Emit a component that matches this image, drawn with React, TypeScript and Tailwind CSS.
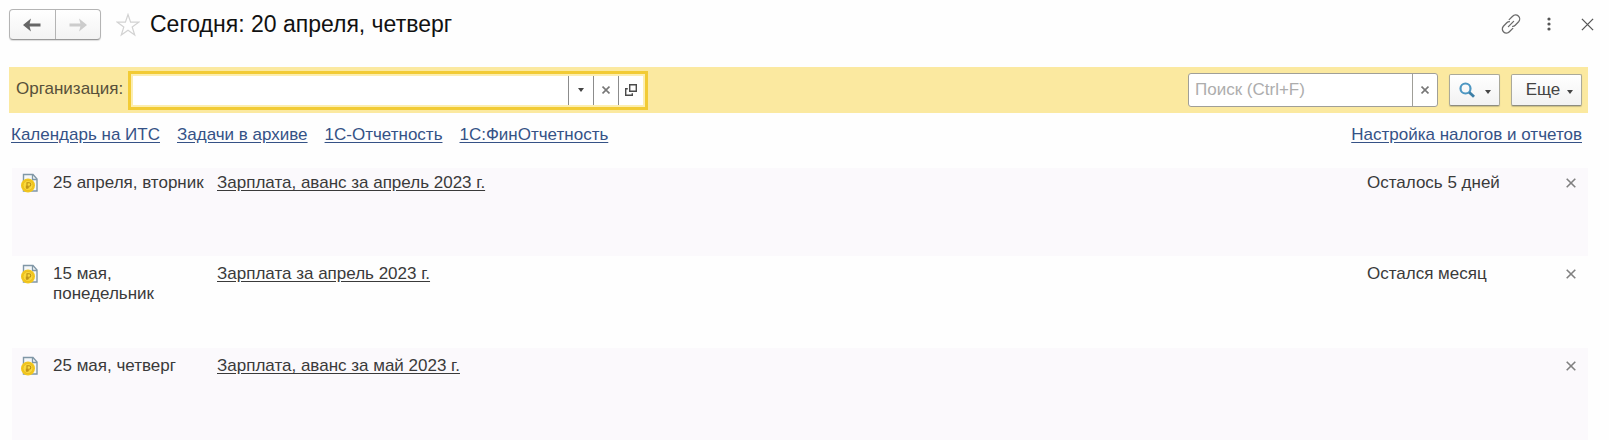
import { useState } from 'react'
import type { ReactNode } from 'react'

interface Task {
  id: number
  date: string
  title: string
  left: string
}

const initialTasks: Task[] = [
  { id: 1, date: '25 апреля, вторник', title: 'Зарплата, аванс за апрель 2023 г.', left: 'Осталось 5 дней' },
  { id: 2, date: '15 мая, понедельник', title: 'Зарплата за апрель 2023 г.', left: 'Остался месяц' },
  { id: 3, date: '25 мая, четверг', title: 'Зарплата, аванс за май 2023 г.', left: '' },
]

const links = ['Календарь на ИТС', 'Задачи в архиве', '1С-Отчетность', '1С:ФинОтчетность']

function ArrowIcon({ className }: { className: string }) {
  return (
    <svg viewBox="0 0 18 14" className={`h-3.5 w-[18px] ${className}`} fill="currentColor" aria-hidden="true">
      <path d="M0 7 8 .5 6.600 5.400H17.500V8.600H6.600L8 13.500Z" />
    </svg>
  )
}

function StarIcon() {
  return (
    <svg viewBox="0 0 24 24" className="size-6" fill="none" stroke="#d2d2d2" strokeWidth="1.2" aria-hidden="true">
      <path d="M12 1.5 14.6 9.2H22.7L16.2 14 18.7 22 12 17.2 5.3 22 7.8 14 1.3 9.2H9.4Z" />
    </svg>
  )
}

function LinkIcon() {
  return (
    <svg viewBox="0 0 20 20" className="size-5" fill="none" stroke="#6b6b6b" strokeWidth="1.3" strokeLinecap="round" aria-hidden="true">
      <path d="M8.200 5.600 11.600 2.300a3.900 3.900 0 0 1 6 5.500L14.200 11.200a3.900 3.900 0 0 1-2.600 1.100" />
      <path d="M11.800 14.400 8.400 17.700a3.900 3.900 0 0 1-6-5.500L5.800 8.800a3.900 3.900 0 0 1 2.600-1.100" />
      <path d="M7.400 12.600 12.600 7.400" />
    </svg>
  )
}

function DotsIcon() {
  return (
    <svg viewBox="0 0 4 14" className="h-3.5 w-1" fill="#555" aria-hidden="true">
      <circle cx="2" cy="2" r="1.6" />
      <circle cx="2" cy="7" r="1.6" />
      <circle cx="2" cy="12" r="1.6" />
    </svg>
  )
}

function CrossIcon({ className }: { className: string }) {
  return (
    <svg viewBox="0 0 10 10" className={className} fill="none" stroke="currentColor" aria-hidden="true">
      <path d="M.7.7 9.3 9.3M9.3.7.7 9.3" />
    </svg>
  )
}

function CaretIcon({ className = '' }: { className?: string }) {
  return (
    <svg viewBox="0 0 6 4" className={`h-1 w-1.5 ${className}`} fill="#444" aria-hidden="true">
      <path d="M0 0H6L3 4Z" />
    </svg>
  )
}

function OpenIcon() {
  return (
    <svg viewBox="0 0 12 12" className="size-3" fill="none" stroke="#4a4a4a" strokeWidth="1.4" aria-hidden="true">
      <path d="M4.700.7H11.300V7.300H4.700Z" />
      <path d="M2.800 4.700H.7V11.300H7.300V9.200" />
    </svg>
  )
}

function SearchIcon() {
  return (
    <svg viewBox="0 0 16 16" className="size-4" fill="none" aria-hidden="true">
      <circle cx="6.500" cy="6.500" r="5" stroke="#4d97c2" strokeWidth="2.200" />
      <path d="M10.200 10.200 15 14.800" stroke="#3b7ea6" strokeWidth="2.800" />
    </svg>
  )
}

function SalaryIcon() {
  return (
    <svg viewBox="0 0 18 20" className="h-5 w-[18px]" fill="none" aria-hidden="true">
      <path d="M2.500 1.500H12L16 6V18H2.500Z" fill="#f4f7f9" stroke="#8097a6" strokeWidth="1.400" />
      <path d="M11.500 1.500V6.500H16" stroke="#8097a6" strokeWidth="1.300" />
      <circle cx="7" cy="12.500" r="7" fill="#f2c71e" />
      <circle cx="7" cy="12.500" r="5" fill="#fad93c" stroke="#e8b91a" strokeWidth=".8" />
      <path d="M6 16V9.700H8a1.800 1.800 0 0 1 0 3.600H4.800M4.800 14.800H8.200" stroke="#bb8d12" strokeWidth="1.100" />
    </svg>
  )
}

function IconButton({ label, className, onClick, children }: {
  label: string
  className: string
  onClick?: () => void
  children: ReactNode
}) {
  return (
    <button type="button" aria-label={label} onClick={onClick} className={`flex items-center justify-center ${className}`}>
      {children}
    </button>
  )
}

function TitleBar() {
  return (
    <header className="flex h-[67px] items-start pt-[9px] pr-1.5">
      <div className="flex h-[31px] w-[92px] rounded-sm border border-[#b4b4b4] border-b-[#999] bg-gradient-to-b from-white to-[#f3f3f3] shadow-[0_1px_1px_#ddd]">
        <IconButton label="Назад" className="flex-1 border-r border-[#b4b4b4]">
          <ArrowIcon className="text-[#666]" />
        </IconButton>
        <IconButton label="Вперед" className="flex-1">
          <ArrowIcon className="rotate-180 text-[#ccc]" />
        </IconButton>
      </div>
      <IconButton label="В избранное" className="ml-[15px] h-[31px]">
        <StarIcon />
      </IconButton>
      <h1 className="ml-2.5 text-[23px] leading-[30px] text-[#111]">Сегодня: 20 апреля, четверг</h1>
      <div className="ml-auto flex h-[30px] items-center">
        <IconButton label="Получить ссылку" className="size-8">
          <LinkIcon />
        </IconButton>
        <IconButton label="Еще действия" className="ml-1.5 size-8">
          <DotsIcon />
        </IconButton>
        <IconButton label="Закрыть" className="ml-1.5 size-8">
          <CrossIcon className="size-[13px] text-[#555]" />
        </IconButton>
      </div>
    </header>
  )
}

function FilterBar() {
  const [org, setOrg] = useState('')
  const [query, setQuery] = useState('')
  const button = 'flex h-8 items-center justify-center rounded-xs border border-[#aaa99a] border-b-[#8d8c80] bg-gradient-to-b from-white to-[#f2f2f2] shadow-[0_1px_1px_#c9bd84]'

  return (
    <div className="flex h-[46px] items-center bg-[#fbe9a0] pr-1.5 pl-[7px] text-[#57503a]">
      <label htmlFor="org" className="w-28 pb-0.5">Организация:</label>
      <div className="flex h-[39px] w-[520px] border-[3px] border-[#f2cb35] bg-[#fceeb0] p-0.5">
        <div className="flex min-w-0 flex-1 bg-white">
          <input
            id="org"
            value={org}
            onChange={(e) => setOrg(e.target.value)}
            className="min-w-0 flex-1 px-1.5 text-[#333] outline-none"
          />
          <IconButton label="Выбрать" className="w-[25px] border-l border-[#8c8c8c]">
            <CaretIcon />
          </IconButton>
          <IconButton label="Очистить" className="w-[25px] border-l border-[#8c8c8c]" onClick={() => setOrg('')}>
            <CrossIcon className="size-2 stroke-2 text-[#777]" />
          </IconButton>
          <IconButton label="Открыть" className="w-[25px] border-l border-[#8c8c8c]">
            <OpenIcon />
          </IconButton>
        </div>
      </div>
      <div className="ml-auto flex h-[34px] w-[250px] overflow-hidden rounded-[3px] border border-[#a09f98] bg-white">
        <input
          aria-label="Поиск"
          placeholder="Поиск (Ctrl+F)"
          value={query}
          onChange={(e) => setQuery(e.target.value)}
          className="min-w-0 flex-1 px-1.5 text-[#333] outline-none placeholder:text-[#adadad]"
        />
        <IconButton label="Очистить поиск" className="w-[25px] border-l border-[#a09f98]" onClick={() => setQuery('')}>
          <CrossIcon className="size-2 stroke-2 text-[#777]" />
        </IconButton>
      </div>
      <button type="button" aria-label="Найти" className={`ml-[11px] w-[51px] gap-2.5 ${button}`}>
        <SearchIcon />
        <CaretIcon className="mt-[3px]" />
      </button>
      <button type="button" className={`ml-[11px] w-[71px] gap-[7px] pl-1.5 text-[#444] ${button}`}>
        Еще
        <CaretIcon className="mt-[3px]" />
      </button>
    </div>
  )
}

function TaskTable() {
  const [tasks, setTasks] = useState(initialTasks)

  return (
    <table className="ml-[3px] w-[calc(100%-3px)] table-fixed text-left text-[#3a3a3a]">
      <colgroup>
        <col className="w-[41px]" />
        <col className="w-[164px]" />
        <col />
        <col className="w-[186px]" />
        <col className="w-[35px]" />
      </colgroup>
      <tbody>
        {tasks.map((task) => (
          <tr key={task.id} className="h-[92px] align-top first:h-[88px] odd:bg-[#fbf9fc] [&>td]:pt-2 first:[&>td]:pt-[5px]">
            <td className="pl-[9px]"><SalaryIcon /></td>
            <td className="pr-2">{task.date}</td>
            <td>
              <a href="#" className="underline underline-offset-2">{task.title}</a>
            </td>
            <td>{task.left}</td>
            <td>
              <IconButton
                label="Убрать задачу"
                className="h-5 w-9"
                onClick={() => setTasks(tasks.filter((t) => t.id !== task.id))}
              >
                <CrossIcon className="size-2.5 stroke-[1.600] text-[#808080]" />
              </IconButton>
            </td>
          </tr>
        ))}
      </tbody>
    </table>
  )
}

export default function App() {
  return (
    <div className="bg-[#fefefe] pl-[9px] font-['Liberation_Sans',Arial,sans-serif] text-[17px] leading-5">
      <TitleBar />
      <main className="pr-[21px]">
        <FilterBar />
        <nav className="flex h-[55px] gap-[17px] pt-3 pr-1.5 pl-0.5 text-[#355286]">
          {links.map((link) => (
            <a key={link} href="#" className="underline underline-offset-2">{link}</a>
          ))}
          <a href="#" className="ml-auto underline underline-offset-2">Настройка налогов и отчетов</a>
        </nav>
        <TaskTable />
      </main>
    </div>
  )
}
